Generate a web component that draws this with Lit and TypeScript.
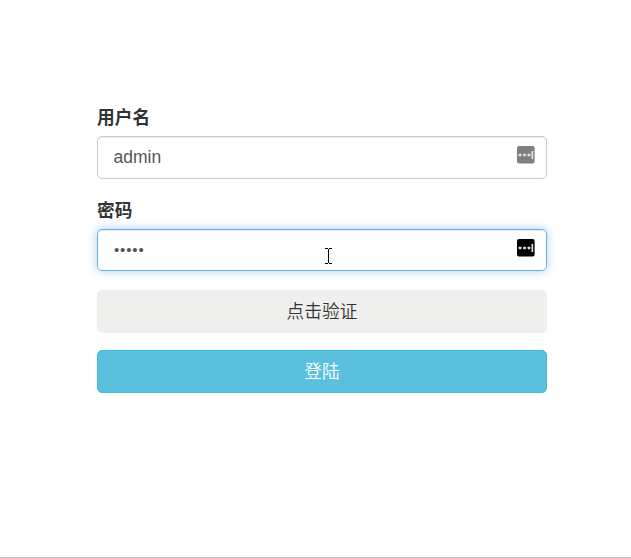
import { LitElement, html, css } from "lit";
import { customElement } from "lit/decorators.js";

@customElement("app-root")
export class AppRoot extends LitElement {
  static styles = css`
    :host {
      display: block;
      box-sizing: border-box;
      position: relative;
      height: 558px;
      overflow: hidden;
      background: #fff;
      border-bottom: 1px solid #c4c4c4;
      font-family: "Liberation Sans", "Noto Sans CJK SC", sans-serif;
      color: #333;
    }
    form {
      display: flex;
      flex-direction: column;
      width: 450px;
      margin: 106px 0 0 97px;
    }
    label {
      font-size: 17.7px;
      line-height: 25px;
      font-weight: 700;
      margin-bottom: 5px;
    }
    .field {
      box-sizing: border-box;
      display: flex;
      justify-content: space-between;
      height: 43px;
      border: 1px solid #ccc;
      border-radius: 5px;
      padding: 9px 11px 0 15.5px;
      margin-bottom: 20px;
      font-size: 17.5px;
      line-height: 23px;
      color: #555;
      box-shadow: inset 0 1px 1px rgba(0, 0, 0, 0.075);
    }
    .focus {
      height: 42px;
      margin-bottom: 19px;
      border-color: #66afe9;
      box-shadow: inset 0 1px 1px rgba(0, 0, 0, 0.075), 0 0 10px rgba(102, 175, 233, 0.6);
    }
    .dots {
      font-size: 15px;
      line-height: 21px;
      letter-spacing: 0.88px;
      padding-left: 0.4px;
    }
    .button {
      box-sizing: border-box;
      height: 43px;
      border-radius: 5px;
      text-align: center;
      font-size: 17.7px;
      line-height: 44px;
      background: #efefee;
      margin-bottom: 17px;
      font-weight: 350;
    }
    .login {
      background: #5bc0de;
      border: 1px solid #46b8da;
      color: #fff;
      line-height: 42px;
    }
    .cursor {
      position: absolute;
      left: 325px;
      top: 248px;
    }
    svg {
      display: block;
    }
  `;

  key(fill: string) {
    return html`<svg width="18" height="18" viewBox="0 0 18 18">
      <rect width="17.6" height="17.6" rx="2" fill=${fill} />
      <g fill="#e8e5e3">
        <rect x="1.7" y="7.7" width="2.7" height="2.5" rx="0.6" />
        <rect x="6.2" y="7.7" width="2.7" height="2.5" rx="0.6" />
        <rect x="10.6" y="7.7" width="2.7" height="2.5" rx="0.6" />
        <rect x="14.5" y="5" width="1.6" height="8" />
      </g>
    </svg>`;
  }

  render() {
    return html`
      <form>
        <label>用户名</label>
        <div class="field"><span>admin</span>${this.key("#808080")}</div>
        <label>密码</label>
        <div class="field focus"><span class="dots">•••••</span>${this.key("#000")}</div>
        <div class="button">点击验证</div>
        <div class="button login">登陆</div>
      </form>
      <svg class="cursor" width="7" height="16" viewBox="0 0 7 16" shape-rendering="crispEdges">
        <path d="M0 0h3v1H0zM4 0h3v1H4zM3 1h1v14H3zM0 15h3v1H0zM4 15h3v1H4z" fill="#000" />
      </svg>
    `;
  }
}
